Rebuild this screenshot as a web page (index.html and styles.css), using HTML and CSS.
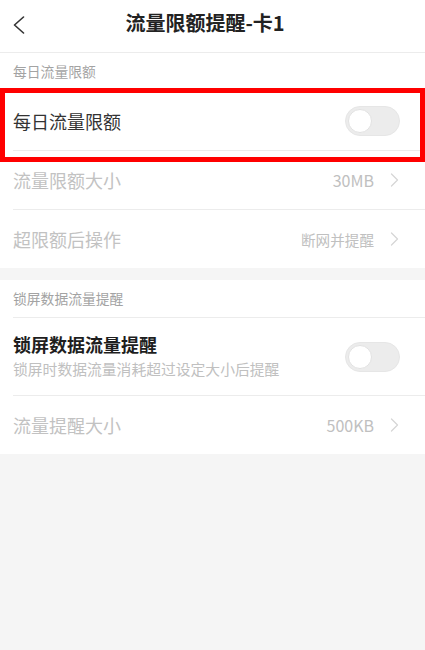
FILE: index.html
```html
<!DOCTYPE html>
<html lang="zh">
<head>
<meta charset="utf-8">
<title>流量限额提醒-卡1</title>
<link rel="stylesheet" href="styles.css">
</head>
<body>
<div class="page">
  <header class="topbar">
    <div class="back">
      <svg width="12" height="18" viewBox="0 0 12 18"><polyline points="10.5,1 1.5,9 10.5,17" fill="none" stroke="#333" stroke-width="1.6" stroke-linecap="round" stroke-linejoin="round"/></svg>
    </div>
    <h1 class="title">流量限额提醒-卡1</h1>
    <div class="spacer"></div>
  </header>

  <section class="group">
    <div class="group-head">每日流量限额</div>
    <div class="row">
      <span class="label">每日流量限额</span>
      <span class="switch"><span class="knob"></span></span>
    </div>
    <div class="row disabled">
      <span class="label">流量限额大小</span>
      <span class="value">30MB</span>
      <svg class="chev" width="9" height="14" viewBox="0 0 9 14"><polyline points="1.5,1 7.5,7 1.5,13" fill="none" stroke="#d6d6d6" stroke-width="1.3" stroke-linecap="round" stroke-linejoin="round"/></svg>
    </div>
    <div class="row disabled">
      <span class="label">超限额后操作</span>
      <span class="value cjk">断网并提醒</span>
      <svg class="chev" width="9" height="14" viewBox="0 0 9 14"><polyline points="1.5,1 7.5,7 1.5,13" fill="none" stroke="#d6d6d6" stroke-width="1.3" stroke-linecap="round" stroke-linejoin="round"/></svg>
    </div>
    <div class="highlight"></div>
  </section>

  <div class="band"></div>

  <section class="group">
    <div class="group-head second">锁屏数据流量提醒</div>
    <div class="row tall">
      <div class="text">
        <span class="label strong">锁屏数据流量提醒</span>
        <span class="sub">锁屏时数据流量消耗超过设定大小后提醒</span>
      </div>
      <span class="switch"><span class="knob"></span></span>
    </div>
    <div class="row disabled">
      <span class="label">流量提醒大小</span>
      <span class="value">500KB</span>
      <svg class="chev" width="9" height="14" viewBox="0 0 9 14"><polyline points="1.5,1 7.5,7 1.5,13" fill="none" stroke="#d6d6d6" stroke-width="1.3" stroke-linecap="round" stroke-linejoin="round"/></svg>
    </div>
  </section>
</div>
</body>
</html>
```

FILE: styles.css
```css
* { box-sizing: border-box; }
html, body {
  margin: 0;
  padding: 0;
  background: #f5f5f5;
  font-family: "Noto Sans CJK SC", "Noto Sans", sans-serif;
}
.page {
  width: 425px;
  min-height: 650px;
  background: #f5f5f5;
}
.topbar {
  height: 53px;
  background: #fff;
  border-bottom: 1px solid #ececec;
  display: grid;
  grid-template-columns: 40px 1fr 55px;
  align-items: center;
}
.back {
  padding-left: 13px;
  display: flex;
  align-items: center;
  height: 100%;
  margin-top: -2px;
}
.title {
  margin: 0;
  margin-top: -7px;
  text-align: center;
  font-size: 20px;
  font-weight: 700;
  color: #222;
  line-height: 28px;
}
.group {
  position: relative;
  background: #fff;
}
.group-head {
  height: 38px;
  padding-left: 13px;
  padding-top: 7px;
  font-size: 13.8px;
  line-height: 22px;
  color: #a3a3a3;
}
.group-head.second {
  height: 37px;
  padding-top: 7px;
}
.row {
  height: 59px;
  margin-left: 13px;
  padding-right: 25px;
  border-top: 1px solid #ececec;
  display: flex;
  align-items: center;
}
.group-head + .row { border-top: none; }
.group-head.second + .row { border-top: 1px solid #ececec; }
.row.tall { height: 78px; }
.label {
  flex: 1;
  font-size: 18px;
  line-height: 26px;
  color: #333;
}
.row.disabled .label { color: #c2c2c2; }
.value {
  font-size: 16px;
  color: #c0c0c0;
  margin-right: 16px;
}
.value.cjk { font-size: 14.6px; }
.chev { display: block; margin-right: 1px; }
.text {
  flex: 1;
  display: flex;
  flex-direction: column;
}
.label.strong {
  font-weight: 700;
  color: #1e1e1e;
  line-height: 24px;
}
.sub {
  font-size: 14.8px;
  line-height: 24px;
  color: #c0c0c0;
  margin-top: 1px;
}
.switch {
  width: 55px;
  height: 30px;
  border-radius: 15px;
  background: #ececec;
  border: 1px solid #e6e6e6;
  display: flex;
  align-items: center;
  padding-left: 2px;
}
.knob {
  width: 24px;
  height: 24px;
  border-radius: 50%;
  background: #fff;
  border: 1px solid #e2e2e2;
}
.highlight {
  position: absolute;
  left: 0;
  top: 35px;
  width: 425px;
  height: 74px;
  border: 5px solid #ff0000;
}
.band {
  height: 12px;
  background: #f5f5f5;
}
```
